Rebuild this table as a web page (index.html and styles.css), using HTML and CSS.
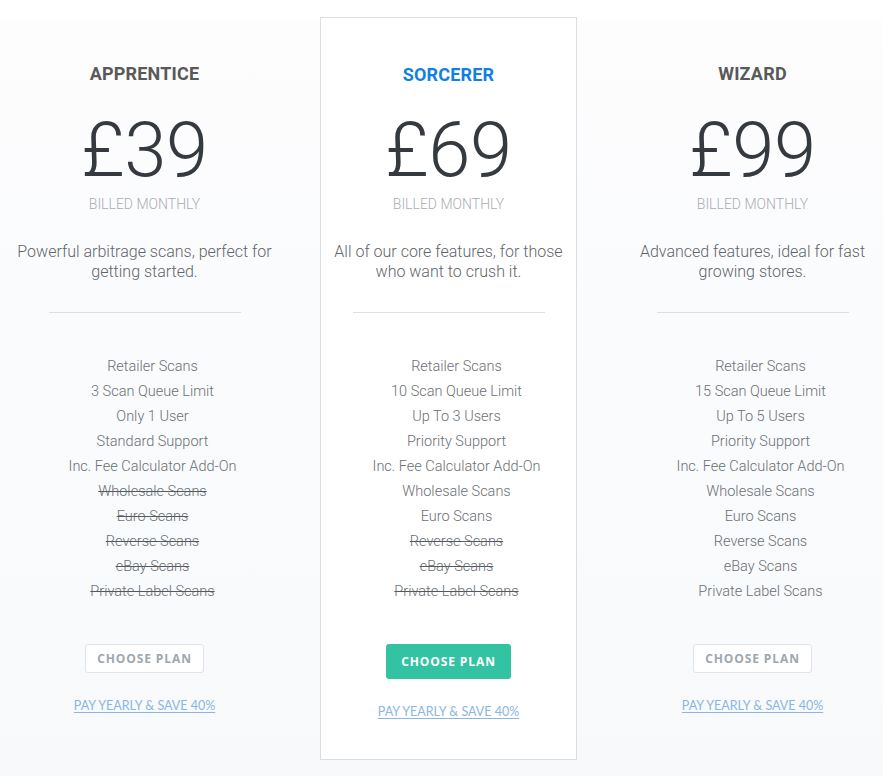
FILE: index.html
```html
<!DOCTYPE html>
<html lang="en">
<head>
<meta charset="utf-8">
<title>Pricing</title>
<link rel="stylesheet" href="styles.css">
</head>
<body>
<main class="plans">
  <section class="plan">
    <h2 class="plan-name">Apprentice</h2>
    <div class="price">£39</div>
    <div class="billing">Billed Monthly</div>
    <p class="desc">Powerful arbitrage scans, perfect for getting started.</p>
    <hr class="divider">
    <ul class="features">
      <li>Retailer Scans</li>
      <li>3 Scan Queue Limit</li>
      <li>Only 1 User</li>
      <li>Standard Support</li>
      <li>Inc. Fee Calculator Add-On</li>
      <li class="off">Wholesale Scans</li>
      <li class="off">Euro Scans</li>
      <li class="off">Reverse Scans</li>
      <li class="off">eBay Scans</li>
      <li class="off">Private Label Scans</li>
    </ul>
    <a class="btn" href="#">Choose Plan</a>
    <a class="yearly" href="#">Pay Yearly &amp; Save 40%</a>
  </section>
  <section class="plan featured">
    <h2 class="plan-name">Sorcerer</h2>
    <div class="price">£69</div>
    <div class="billing">Billed Monthly</div>
    <p class="desc">All of our core features, for those who want to crush it.</p>
    <hr class="divider">
    <ul class="features">
      <li>Retailer Scans</li>
      <li>10 Scan Queue Limit</li>
      <li>Up To 3 Users</li>
      <li>Priority Support</li>
      <li>Inc. Fee Calculator Add-On</li>
      <li>Wholesale Scans</li>
      <li>Euro Scans</li>
      <li class="off">Reverse Scans</li>
      <li class="off">eBay Scans</li>
      <li class="off">Private Label Scans</li>
    </ul>
    <a class="btn btn-primary" href="#">Choose Plan</a>
    <a class="yearly" href="#">Pay Yearly &amp; Save 40%</a>
  </section>
  <section class="plan">
    <h2 class="plan-name">Wizard</h2>
    <div class="price">£99</div>
    <div class="billing">Billed Monthly</div>
    <p class="desc">Advanced features, ideal for fast growing stores.</p>
    <hr class="divider">
    <ul class="features">
      <li>Retailer Scans</li>
      <li>15 Scan Queue Limit</li>
      <li>Up To 5 Users</li>
      <li>Priority Support</li>
      <li>Inc. Fee Calculator Add-On</li>
      <li>Wholesale Scans</li>
      <li>Euro Scans</li>
      <li>Reverse Scans</li>
      <li>eBay Scans</li>
      <li>Private Label Scans</li>
    </ul>
    <a class="btn" href="#">Choose Plan</a>
    <a class="yearly" href="#">Pay Yearly &amp; Save 40%</a>
  </section>
</main>
</body>
</html>
```

FILE: styles.css
```css
* { box-sizing: border-box; }

html, body {
  margin: 0;
  padding: 0;
}

body {
  min-height: 776px;
  background: linear-gradient(to bottom, #ffffff 0, #ffffff 21px, #fdfdfe 21px, #f7f9fb 100%);
  font-family: Roboto, "Liberation Sans", Arial, sans-serif;
  overflow: hidden;
}

.plans {
  display: grid;
  grid-template-columns: repeat(3, 257px);
  column-gap: 47px;
  padding: 17px 0 0 16px;
}

.plan {
  display: flex;
  flex-direction: column;
  align-items: center;
  text-align: center;
  border: 1px solid transparent;
  padding: 45px 0 39px;
}

.plan.featured {
  background: #ffffff;
  border-color: #d9dee3;
}

.plan-name {
  margin: 0;
  font-size: 18px;
  line-height: 22px;
  font-weight: 700;
  text-transform: uppercase;
  color: #595959;
  letter-spacing: 0.2px;
}

.featured .plan-name {
  color: #137fe4;
  margin-top: 1px;
  margin-bottom: -1px;
}

.price {
  margin-top: 27px;
  font-size: 76px;
  line-height: 76px;
  font-weight: 300;
  color: #343a40;
  letter-spacing: -0.5px;
}

.billing {
  margin-top: 6px;
  font-size: 14px;
  line-height: 20px;
  font-weight: 300;
  text-transform: uppercase;
  color: #a9adb2;
}

.desc {
  margin: 28px -2px 0;
  font-size: 16px;
  line-height: 20px;
  font-weight: 300;
  color: #5f656b;
}

.divider {
  width: 192px;
  height: 1px;
  margin: 30px 0 0;
  border: 0;
  background: #dcdfe3;
}

.features {
  list-style: none;
  margin: 41px 0 0;
  padding: 0 0 0 16px;
  font-size: 14.5px;
  line-height: 25px;
  font-weight: 300;
  color: #6b7075;
}

.features .off {
  text-decoration: line-through;
  text-decoration-color: #555a5f;
}

.btn {
  margin-top: 40px;
  display: inline-block;
  padding: 0 11px;
  height: 29px;
  line-height: 27px;
  border: 1px solid #e0e3e7;
  border-radius: 3px;
  background: #ffffff;
  font-family: "Open Sans", "Liberation Sans", sans-serif;
  font-size: 12px;
  font-weight: 700;
  letter-spacing: 0.9px;
  text-transform: uppercase;
  text-decoration: none;
  color: #9ea6b0;
}

.btn-primary {
  height: 35px;
  line-height: 35px;
  padding: 0 15px;
  border: 0;
  background: #33c3a3;
  color: #ffffff;
}

.yearly {
  margin-top: 25px;
  font-family: Lato, "Liberation Sans", sans-serif;
  font-size: 12.5px;
  line-height: 16px;
  text-transform: uppercase;
  color: #89b7e2;
  text-decoration: underline;
  text-underline-offset: 2px;
}
```
